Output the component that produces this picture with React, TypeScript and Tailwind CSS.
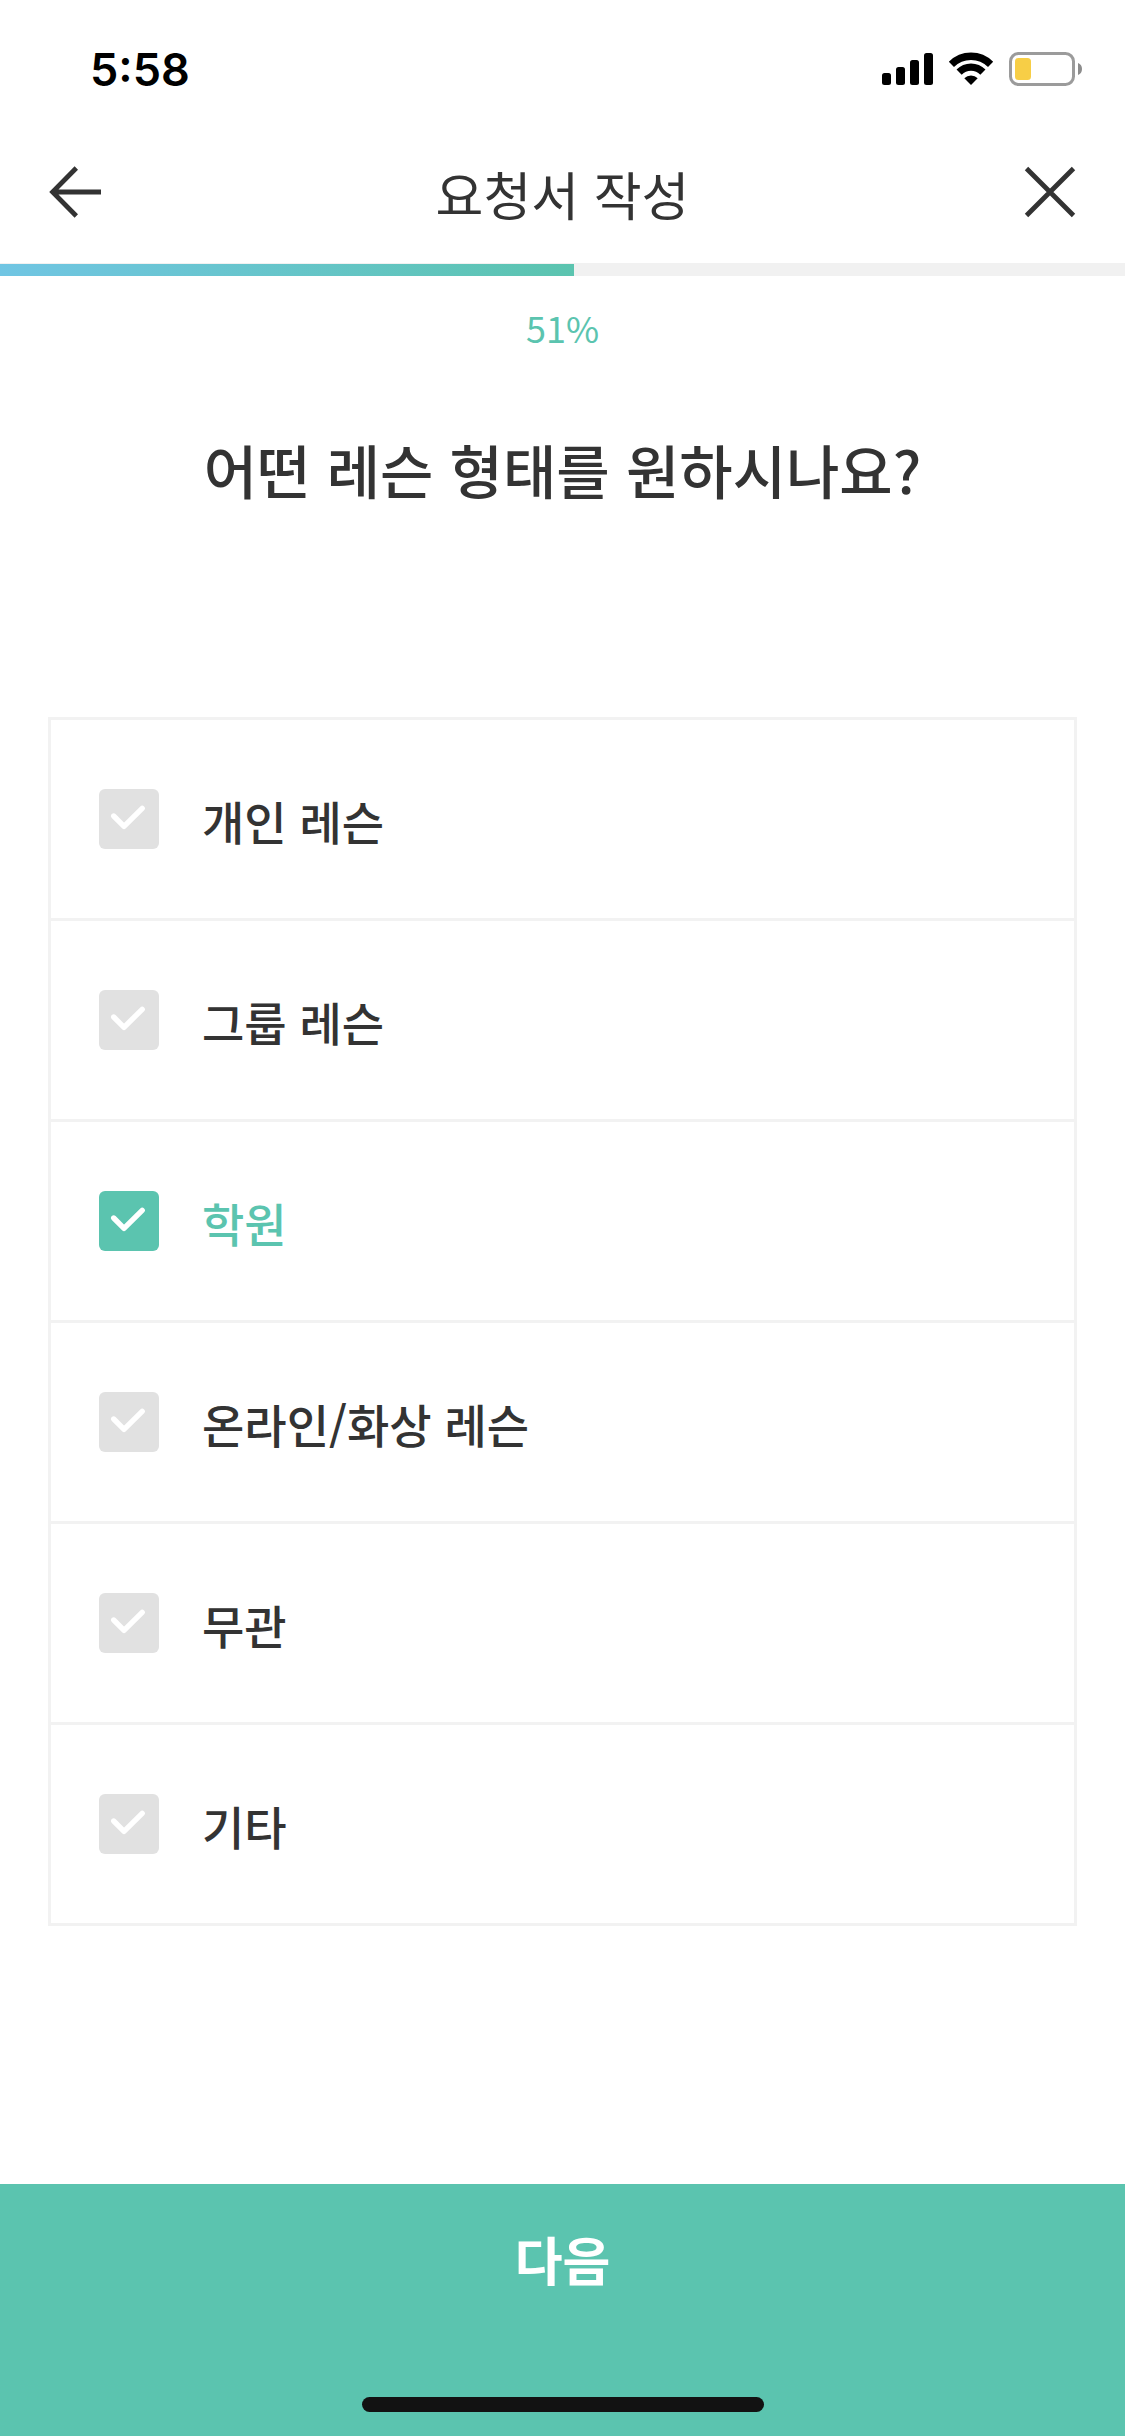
import { useState } from "react";

const options = ["개인 레슨", "그룹 레슨", "학원", "온라인/화상 레슨", "무관", "기타"];
const progress = 51;

function StatusBar() {
  return (
    <div className="flex h-[138px] items-center justify-between pr-[43px] pl-[90px]">
      <span className="font-['Inter',sans-serif] text-[45px] leading-none font-semibold text-black">5:58</span>
      <div className="flex items-center gap-[15px]">
        <svg width="51" height="34" viewBox="0 0 51 34" aria-hidden="true">
          <rect x="0" y="21" width="9" height="12" rx="2.5" />
          <rect x="14" y="15" width="9" height="18" rx="2.5" />
          <rect x="28" y="8" width="9" height="25" rx="2.5" />
          <rect x="42" y="1" width="9" height="32" rx="2.5" />
        </svg>
        <svg width="46" height="34" viewBox="0 0 46 34" fill="none" stroke="#000" strokeWidth="7.3" aria-hidden="true">
          <path d="M3.4 12.4A27.7 27.7 0 0 1 42.6 12.4" />
          <path d="M11.1 20.1A16.8 16.8 0 0 1 34.9 20.1" />
          <path d="M23 33L16.3 26.3A9.5 9.5 0 0 1 29.7 26.3Z" fill="#000" stroke="none" />
        </svg>
        <svg width="73" height="34" viewBox="0 0 73 34" aria-hidden="true">
          <rect x="1.5" y="1.5" width="63" height="31" rx="8" fill="none" stroke="#9b9b9b" strokeWidth="3" />
          <rect x="6" y="6" width="16" height="22" rx="3.5" fill="#f7ce46" />
          <path d="M69 11A6.5 6.5 0 0 1 69 23Z" fill="#8c8c8c" />
        </svg>
      </div>
    </div>
  );
}

function Header() {
  return (
    <header className="mb-[17px] flex h-[108px] items-center justify-between px-12">
      <button type="button" aria-label="뒤로" className="text-[#333]">
        <svg width="54" height="54" viewBox="0 0 54 54" fill="none" stroke="currentColor" strokeWidth="4.8">
          <path d="M28.3 3L4.6 27L28.3 51M4 27H53" />
        </svg>
      </button>
      <h1 className="pt-1 text-[52px] leading-none text-[#333]">요청서 작성</h1>
      <button type="button" aria-label="닫기" className="text-[#333]">
        <svg width="54" height="54" viewBox="0 0 54 54" fill="none" stroke="currentColor" strokeWidth="4.8">
          <path d="M3.5 3.5L50.5 50.5M50.5 3.5L3.5 50.5" />
        </svg>
      </button>
    </header>
  );
}

function Option({ label, checked, onToggle }: { label: string; checked: boolean; onToggle: () => void }) {
  return (
    <li>
      <label className="flex h-[198px] cursor-pointer items-center gap-[43px] px-12">
        <span className="grid shrink-0 place-items-center">
          <input
            type="checkbox"
            checked={checked}
            onChange={onToggle}
            className="col-start-1 row-start-1 size-[60px] appearance-none rounded-md bg-[#e1e1e1] checked:bg-[#5bc4af]"
          />
          <svg
            className="pointer-events-none col-start-1 row-start-1"
            width="60"
            height="60"
            viewBox="0 0 60 60"
            fill="none"
            stroke="#fff"
            strokeWidth="5.4"
            strokeLinecap="round"
            strokeLinejoin="round"
            aria-hidden="true"
          >
            <path d="M14.7 27L25 37.3L43.2 19.3" />
          </svg>
        </span>
        <span
          className={
            checked ? "pt-0.5 text-[46px] font-medium text-[#5bc4af]" : "pt-0.5 text-[46px] font-medium text-[#333]"
          }
        >
          {label}
        </span>
      </label>
    </li>
  );
}

export default function App() {
  const [selected, setSelected] = useState<string[]>(["학원"]);

  const toggle = (label: string) =>
    setSelected((current) =>
      current.includes(label) ? current.filter((item) => item !== label) : [...current, label],
    );

  return (
    <div lang="ko" className="flex min-h-screen flex-col bg-white font-['Noto_Sans_CJK_KR',sans-serif]">
      <StatusBar />
      <Header />
      <div
        role="progressbar"
        aria-label="진행률"
        aria-valuenow={progress}
        aria-valuemin={0}
        aria-valuemax={100}
        className="h-[13px] bg-[#f1f1f1] pt-px"
      >
        <div className="h-3 bg-linear-to-r from-[#70c5e3] to-[#5bc4af]" style={{ width: `${progress}%` }} />
      </div>
      <main className="flex flex-col px-12">
        <p className="mt-6 text-center text-[36px] leading-[54px] text-[#5bc4af]">{progress}%</p>
        <h2 className="mt-[70px] text-center text-[58px] leading-[90px] font-medium text-[#333]">
          어떤 레슨 형태를 원하시나요?
        </h2>
        <ul className="mt-[203px] divide-y-3 divide-[#f2f2f2] border-3 border-[#f2f2f2]">
          {options.map((label) => (
            <Option key={label} label={label} checked={selected.includes(label)} onToggle={() => toggle(label)} />
          ))}
        </ul>
      </main>
      <footer className="mt-auto flex flex-col items-center bg-[#5bc4af] pb-6">
        <button type="button" className="h-[150px] w-full text-[52px] font-bold text-white">
          다음
        </button>
        <div className="mt-[63px] h-[15px] w-[402px] rounded-full bg-[#121212]" />
      </footer>
    </div>
  );
}
